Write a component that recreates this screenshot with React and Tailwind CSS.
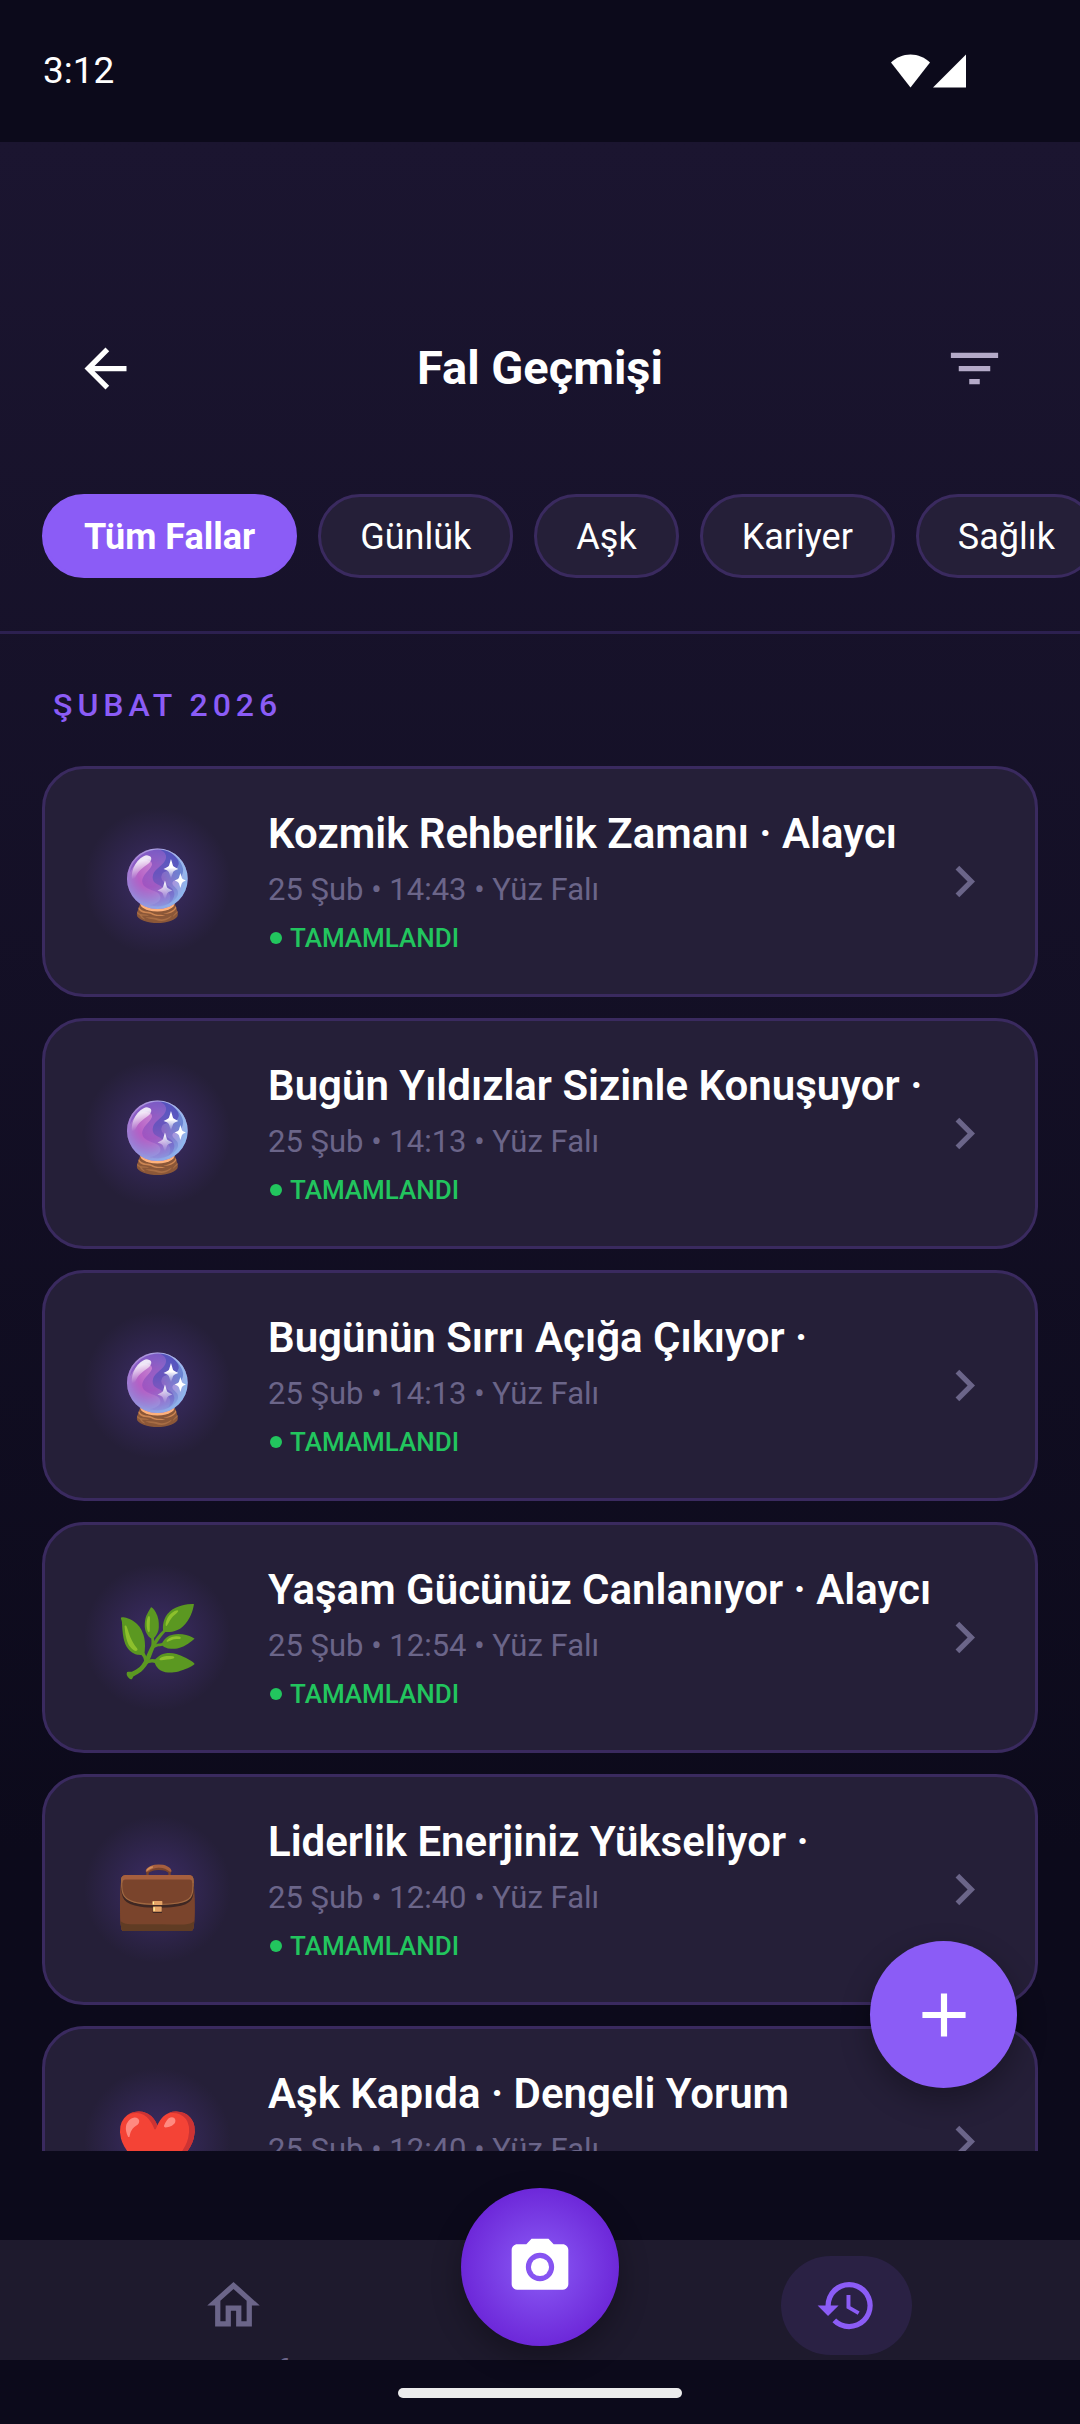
import React, { useState } from 'react';
import {
    MdAdd,
    MdArrowBack,
    MdChevronRight,
    MdFilterList,
    MdHistory,
    MdOutlineHome,
    MdPhotoCamera,
} from 'react-icons/md';

const CATEGORIES = ['Tüm Fallar', 'Günlük', 'Aşk', 'Kariyer', 'Sağlık'];

const READINGS = [
    { icon: '🔮', title: 'Kozmik Rehberlik Zamanı · Alaycı', time: '14:43' },
    { icon: '🔮', title: 'Bugün Yıldızlar Sizinle Konuşuyor ·', time: '14:13' },
    { icon: '🔮', title: 'Bugünün Sırrı Açığa Çıkıyor ·', time: '14:13' },
    { icon: '🌿', title: 'Yaşam Gücünüz Canlanıyor · Alaycı', time: '12:54' },
    { icon: '💼', title: 'Liderlik Enerjiniz Yükseliyor ·', time: '12:40' },
    { icon: '❤️', title: 'Aşk Kapıda · Dengeli Yorum', time: '12:40' },
];

const StatusBar = () => (
    <div className="flex h-[142px] shrink-0 items-center justify-between bg-[#0c0a1b] pl-[43px] pr-[114px]">
        <span className="text-[37px] leading-[44px]">3:12</span>
        <svg width="75" height="34" viewBox="0 0 75 34" fill="#fff" aria-hidden="true">
            <path d="M0 8.500C5 3.500 12 0.500 19.500 0.500S34 3.500 39 8.500L19.500 33.500Z" />
            <path d="M75 0.500V33.500H42Z" />
        </svg>
    </div>
);

const CategoryChip = ({ label, active, onClick }) => (
    <button
        type="button"
        onClick={onClick}
        className={`h-[84px] shrink-0 rounded-full border-[3px] px-[39px] pt-0.5 text-[36px] leading-[44px] ${
            active ? 'border-[#8b5cf6] bg-[#8b5cf6] font-bold' : 'border-[#3a2a5f] bg-[#251f38]'
        }`}
    >
        {label}
    </button>
);

const ReadingCard = ({ icon, title, time }) => (
    <li>
        <a
            href="#detail"
            className="flex items-center gap-[37px] rounded-[42px] border-[3px] border-[#3a2a5f] bg-[#251f38] p-[39px]"
        >
            <span className="flex size-[147px] shrink-0 items-center justify-center rounded-full bg-[radial-gradient(circle_closest-side,#3d2d68,#251f38)] pt-2 text-[68px] leading-[80px]">
                {icon}
            </span>
            <div className="min-w-0 flex-1">
                <h3 className="whitespace-nowrap text-[42px] font-semibold leading-[50px]">{title}</h3>
                <p className="mt-[11px] text-[31px] leading-[40px] text-[#6b6589]">25 Şub • {time} • Yüz Falı</p>
                <p className="mt-3 flex items-center gap-2 pl-0.5 text-[26px] font-medium leading-[32px] text-[#22c55e]">
                    <span className="size-3 rounded-full bg-[#22c55e]" />
                    TAMAMLANDI
                </p>
            </div>
            <MdChevronRight className="size-[63px] shrink-0 text-[#6b6589]" />
        </a>
    </li>
);

const BottomNav = () => (
    <nav className="relative mt-[89px] h-[120px] shrink-0 bg-[#1e1a2d]">
        <div className="grid h-full grid-cols-3 overflow-hidden px-20 pt-4 text-[32px] leading-8">
            <a href="#home" className="flex flex-col items-center text-[#6b6589]">
                <span className="rounded-full px-[34px] py-[18px]">
                    <MdOutlineHome className="size-[63px]" />
                </span>
                Ana Sayfa
            </a>
            <a href="#history" className="col-start-3 flex flex-col items-center text-[#8b5cf6]">
                <span className="rounded-full bg-[#2a2144] px-[34px] py-[18px]">
                    <MdHistory className="size-[63px]" />
                </span>
                Geçmiş
            </a>
        </div>
        <button
            type="button"
            aria-label="Fotoğraf çek"
            className="absolute -top-[52px] left-1/2 flex size-[158px] -translate-x-1/2 items-center justify-center rounded-full bg-[radial-gradient(circle_closest-side,#8b5cf6,#6d28d9)] shadow-[0_12px_30px_rgba(0,0,0,0.3)]"
        >
            <MdPhotoCamera className="size-[68px]" />
        </button>
    </nav>
);

const App = () => {
    const [category, setCategory] = useState(CATEGORIES[0]);

    return (
        <div className="flex h-screen flex-col overflow-hidden bg-[#0c0a1b] font-['Roboto','Noto_Color_Emoji',sans-serif] text-white">
            <StatusBar />

            <div className="flex min-h-0 flex-1 flex-col bg-linear-to-b from-[#1b1530] to-[#0c0a1b] to-85%">
                {/* Header */}
                <header className="border-b-[3px] border-[#2c2050] pb-[53px] pt-[163px]">
                    <div className="flex h-[126px] items-center justify-between px-[42px]">
                        <button type="button" aria-label="Geri" className="p-8">
                            <MdArrowBack className="size-[63px]" />
                        </button>
                        <h1 className="text-[47px] font-bold leading-[56px]">Fal Geçmişi</h1>
                        <button type="button" aria-label="Filtrele" className="p-8 text-[#b4aac8]">
                            <MdFilterList className="size-[63px]" />
                        </button>
                    </div>
                    <div className="mt-[63px] flex gap-[21px] overflow-hidden px-[42px]">
                        {CATEGORIES.map((item) => (
                            <CategoryChip
                                key={item}
                                label={item}
                                active={item === category}
                                onClick={() => setCategory(item)}
                            />
                        ))}
                    </div>
                </header>

                {/* Readings */}
                <main className="relative min-h-0 flex-1 overflow-hidden px-[42px] pt-[51px]">
                    <h2 className="px-[11px] text-[32px] font-medium leading-[40px] tracking-[5px] text-[#8b5cf6]">
                        ŞUBAT 2026
                    </h2>
                    <ul className="mt-[41px] flex flex-col gap-[21px]">
                        {READINGS.map((reading, index) => (
                            <ReadingCard key={index} {...reading} />
                        ))}
                    </ul>
                    <button
                        type="button"
                        aria-label="Yeni fal"
                        className="absolute bottom-[63px] right-[63px] flex size-[147px] items-center justify-center rounded-full bg-[#8b5cf6] shadow-[0_12px_30px_rgba(0,0,0,0.3)]"
                    >
                        <MdAdd className="size-[74px]" />
                    </button>
                </main>
            </div>

            <BottomNav />

            {/* Gesture bar */}
            <div className="flex h-16 shrink-0 items-center justify-center pt-0.5">
                <div className="h-[10px] w-[284px] rounded-full bg-[#ececec]" />
            </div>
        </div>
    );
};

export default App;
